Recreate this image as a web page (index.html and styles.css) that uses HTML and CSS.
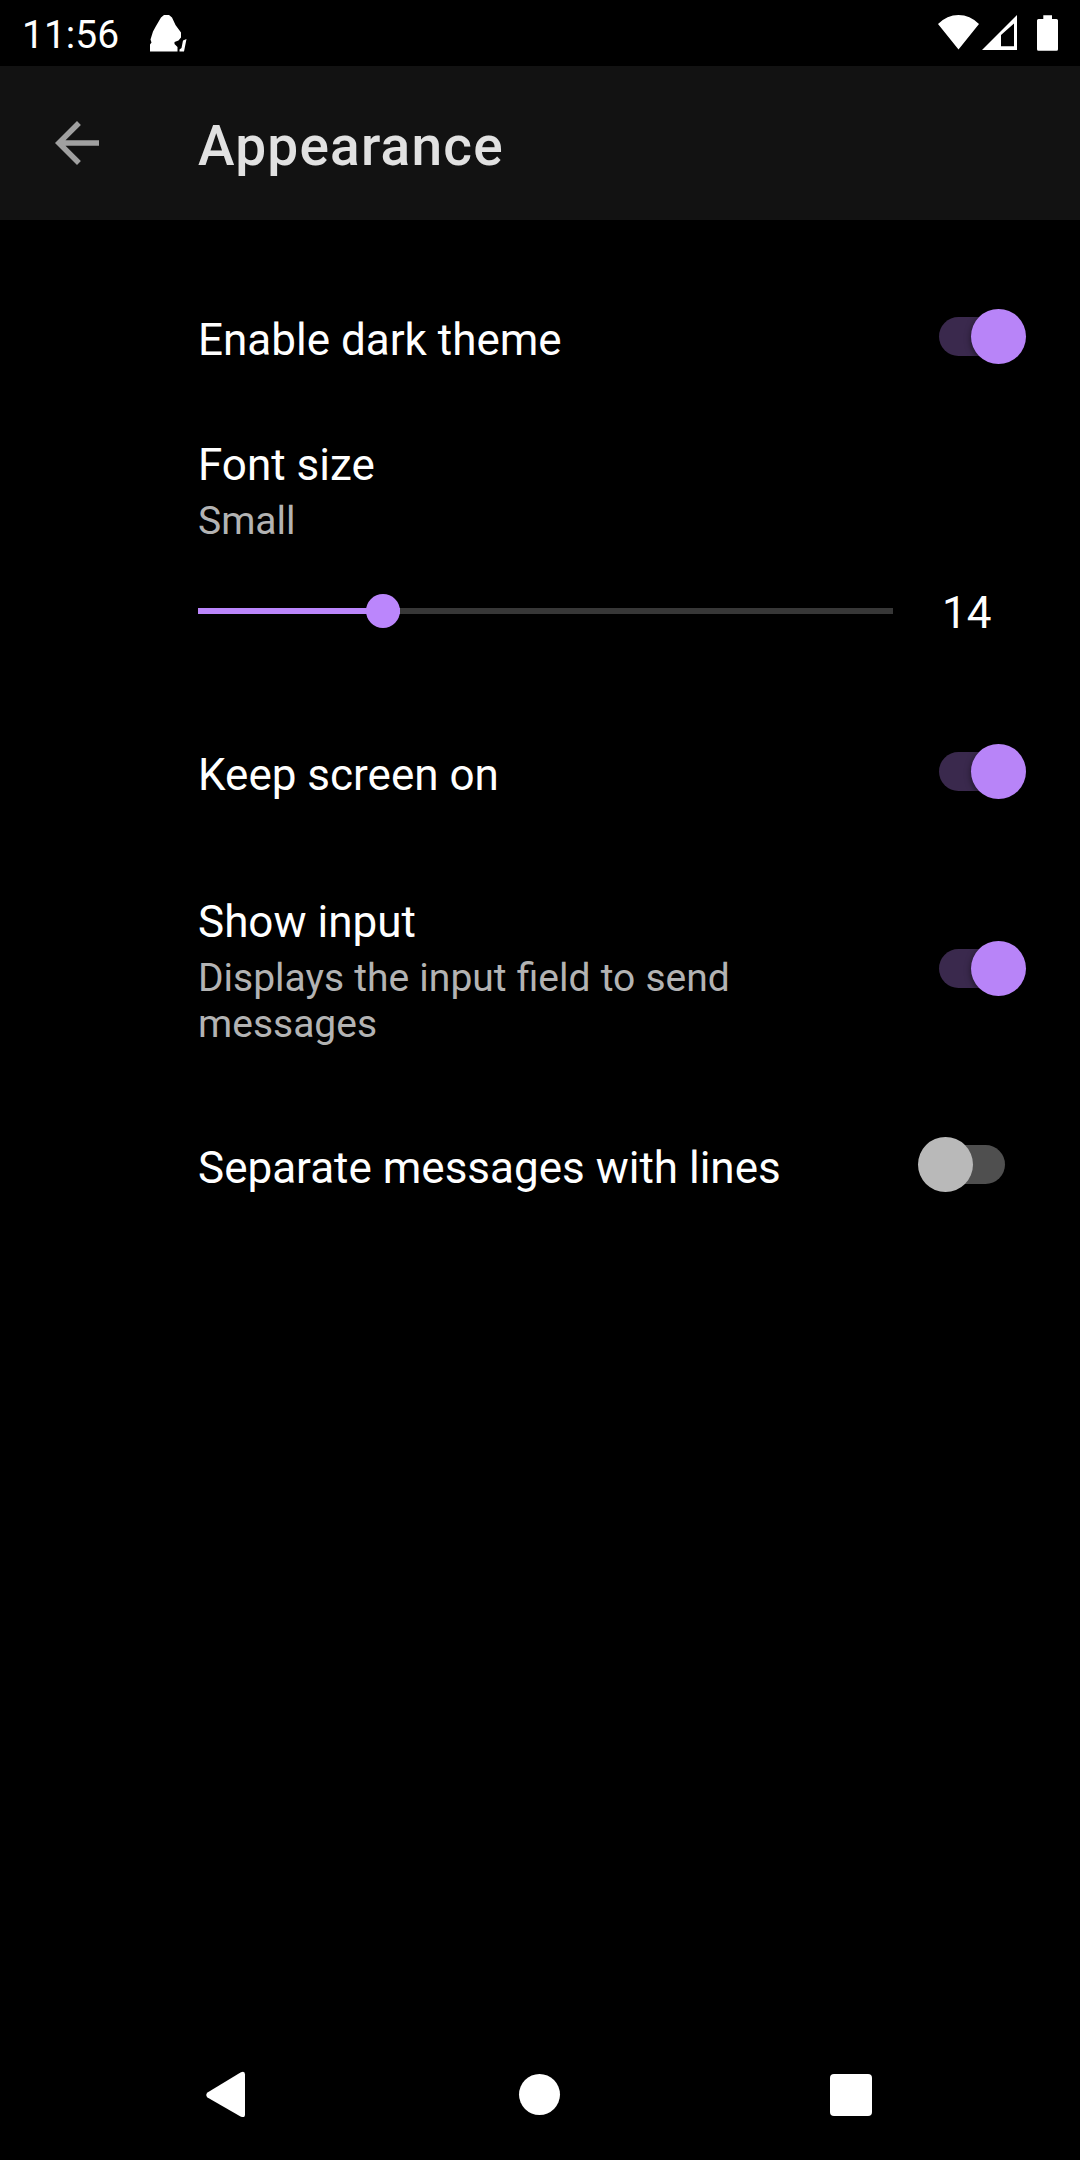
FILE: index.html
```html
<!DOCTYPE html>
<html lang="en">
<head>
<meta charset="utf-8">
<title>Appearance</title>
<link rel="stylesheet" href="styles.css">
</head>
<body>
<div class="status">
  <span class="clock">11:56</span>
  <svg class="notice" width="37" height="37" viewBox="0 0 37 37"><path fill="#fff" d="M14 0H19L22 2.500L25.500 10L31 17.500V22.500L28.500 25.500L24.500 27V29L27.500 32V36.500H0V29.500L1.500 27.500L.5 24.500L3 16.500L6 11L11 2.500ZM33 25.500L36.500 24L34 36.500H29.500V34.500L31.500 33Z"/></svg>
  <svg class="system" width="122" height="37" viewBox="0 0 122 37"><path fill="#fff" d="M0 9Q9 0 20.500 0T41 9L20.500 34.500ZM44 35L79 0V35ZM63 20V31.300H76V8.500Z" fill-rule="evenodd"/><path fill="#fff" d="M105.300 .3H114V4H118.500Q120 4 120 5.500V34.200Q120 35.700 118.500 35.700H100.500Q99 35.700 99 34.200V5.500Q99 4 100.500 4H105.300Z"/></svg>
</div>
<header class="appbar">
  <svg width="66" height="66" viewBox="0 0 24 24"><path fill="#a0a0a0" d="M20 11H7.830l5.590-5.590L12 4l-8 8 8 8 1.410-1.410L7.830 13H20v-2z"/></svg>
  <h1 class="title">Appearance</h1>
</header>
<main class="list">
  <div class="row"><div class="label">Enable dark theme</div><div class="switch on"><i class="thumb"></i></div></div>
  <div class="size">
    <div class="label">Font size</div>
    <div class="summary">Small</div>
    <div class="control">
      <div class="slider"><div class="fill"><i class="knob"></i></div></div>
      <span class="label value">14</span>
    </div>
  </div>
  <div class="row"><div class="label">Keep screen on</div><div class="switch on"><i class="thumb"></i></div></div>
  <div class="row tall">
    <div class="text"><div class="label">Show input</div><div class="summary">Displays the input field to send messages</div></div>
    <div class="switch on"><i class="thumb"></i></div>
  </div>
  <div class="row last"><div class="label">Separate messages with lines</div><div class="switch"><i class="thumb"></i></div></div>
</main>
<nav class="nav">
  <svg width="40" height="46" viewBox="0 0 40 46"><path fill="#fff" d="M1.500 21.500L34.500 1.500Q39 -.5 39 3.500V43.500Q39 47.500 34.500 45.500L1.500 26.500Q-1 24 1.500 21.500Z"/></svg>
  <i class="home"></i>
  <i class="recent"></i>
</nav>
</body>
</html>
```

FILE: styles.css
```css
* { box-sizing: border-box; }
body {
  margin: 0;
  width: 1080px;
  height: 2160px;
  display: flex;
  flex-direction: column;
  background: #000;
  color: #fff;
  font-family: Roboto, sans-serif;
  overflow: hidden;
}
svg, i { display: block; flex: none; }
.status {
  height: 66px;
  display: flex;
  align-items: flex-start;
  padding: 15px 20px 0 22px;
}
.clock { width: 128px; margin-top: -3px; font-size: 39px; line-height: 46px; }
.system { margin-left: auto; }
.appbar {
  height: 154px;
  display: flex;
  align-items: flex-start;
  padding: 44px 44px 0;
  background: #121212;
}
.title {
  margin: 4px 0 0 88px;
  font-size: 55px;
  line-height: 64px;
  font-weight: 500;
  letter-spacing: 1.2px;
  color: #e1e1e1;
}
.list { flex: 1; padding: 49px 53px 0 198px; }
.row { height: 135px; display: flex; align-items: center; justify-content: space-between; }
.row.tall { height: 259px; }
.row.last { height: 133px; }
.row > .label { padding-top: 7px; }
.row > .text { padding-top: 5px; width: 600px; }
.label { font-size: 44px; line-height: 52px; }
.summary { margin-top: 7px; font-size: 39px; line-height: 46px; word-spacing: 0.5px; color: #b3b3b3; }
.size { height: 300px; padding-top: 35px; }
.control { display: flex; align-items: center; margin-top: 43px; }
.slider { width: 695px; height: 6px; margin-top: -4px; background: #373737; }
.fill { width: 202px; height: 6px; display: flex; align-items: center; justify-content: flex-end; background: #bb86fc; }
.knob { width: 34px; height: 34px; border-radius: 50%; background: #bb86fc; }
.value { margin-left: 49px; }
.switch {
  flex: none;
  width: 66px;
  height: 39px;
  margin-right: 22px;
  display: flex;
  align-items: center;
  border-radius: 20px;
  background: #4f4f4f;
}
.thumb { width: 55px; height: 55px; margin: 0 0 0 -21.5px; border-radius: 50%; background: #b9b9b9; }
.switch.on { background: #3a294d; }
.on .thumb { margin: 0.5px 0 0 32.4px; background: #b884f8; box-shadow: 0 2px 6px rgba(0, 0, 0, .5); }
.nav {
  height: 132px;
  display: flex;
  align-items: center;
  justify-content: space-between;
  padding: 0 208px 0 206px;
}
.home { width: 41px; height: 41px; margin-left: 3px; border-radius: 50%; background: #fff; }
.recent { width: 42px; height: 42px; margin-top: 1px; border-radius: 4px; background: #fff; }
```
